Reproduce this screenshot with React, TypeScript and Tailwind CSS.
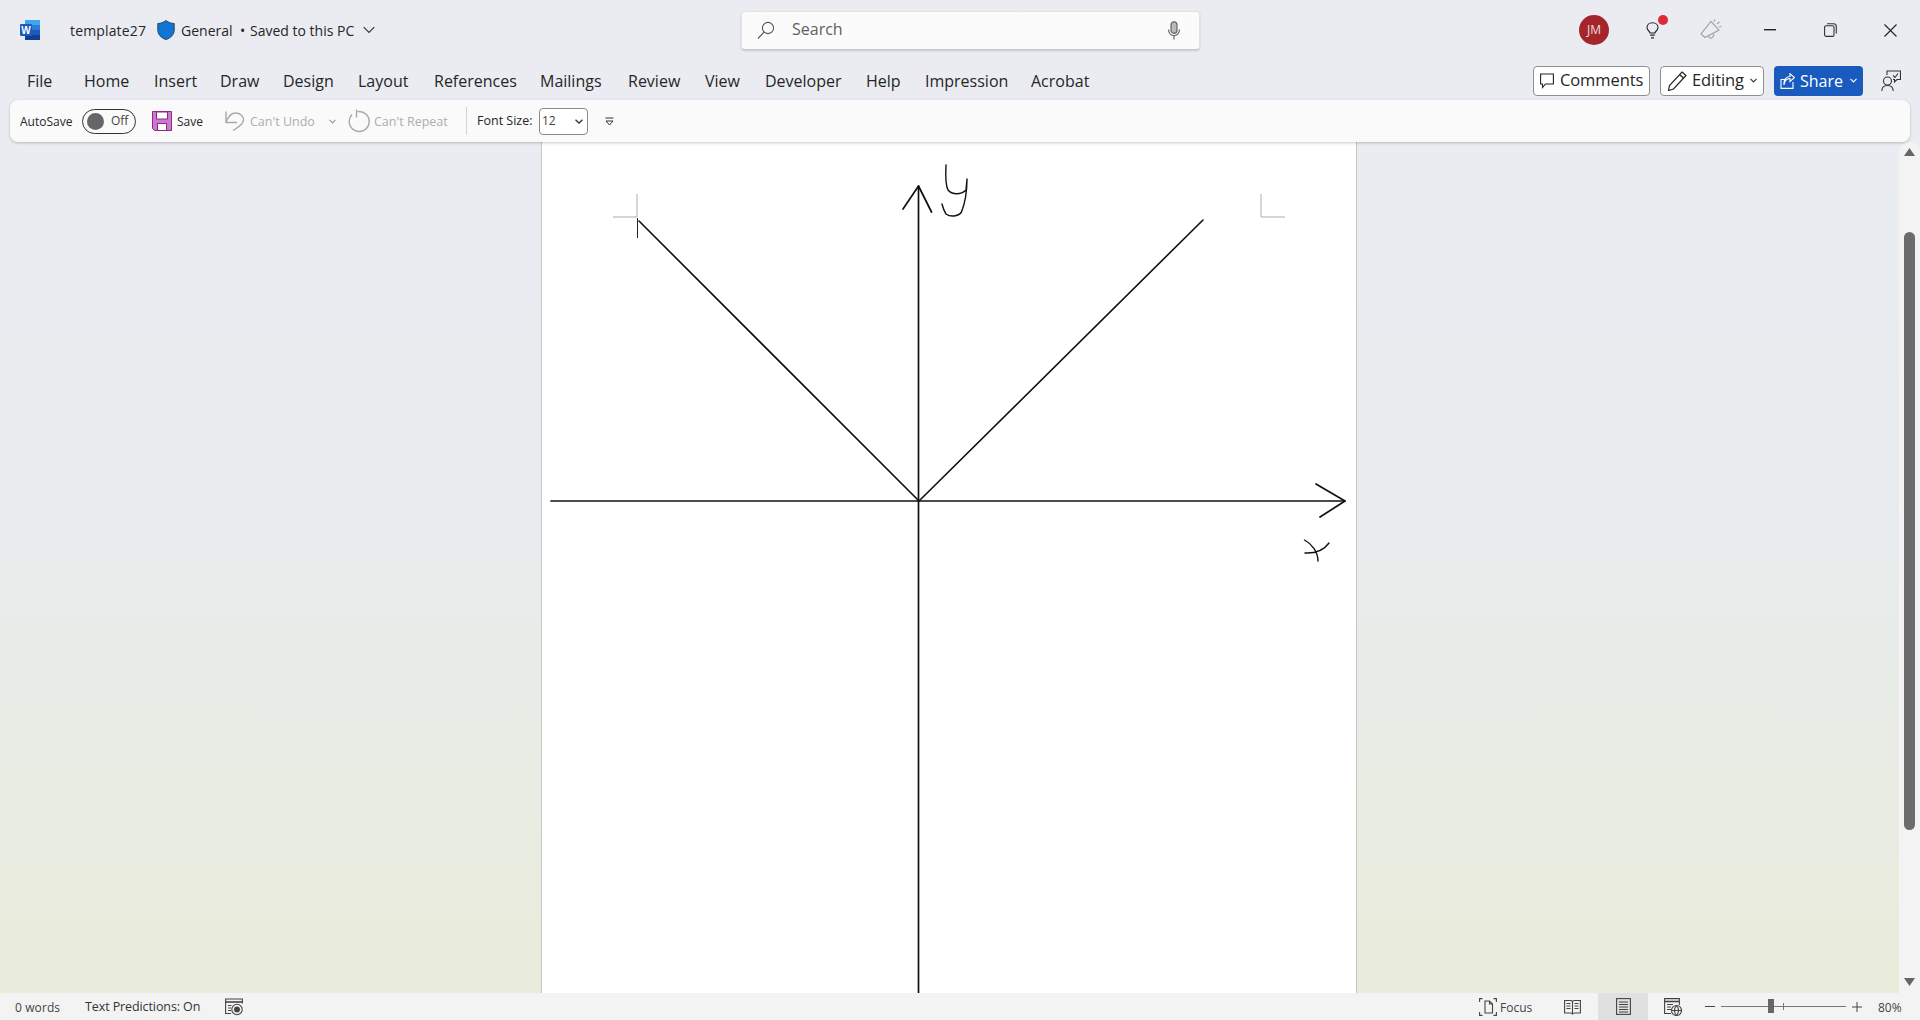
import React from "react";

const font = { fontFamily: '"Open Sans", "Noto Sans", sans-serif' };

function WordIcon() {
  return (
    <svg width="20" height="20" viewBox="0 0 20 20" className="shrink-0">
      <rect x="5" y="0" width="15" height="5" fill="#41a5ee" />
      <rect x="5" y="5" width="15" height="5" fill="#2b7cd3" />
      <rect x="5" y="10" width="15" height="5" fill="#185abd" />
      <rect x="5" y="15" width="15" height="5" fill="#103f91" />
      <rect x="0" y="4" width="12" height="12" rx="1" fill="#1a5bbd" />
      <text x="6" y="13.6" textAnchor="middle" fontSize="10" fontWeight="700" fill="#fff" fontFamily="Liberation Sans">W</text>
    </svg>
  );
}

function Shield() {
  return (
    <svg width="18" height="20" viewBox="0 0 18 20" className="shrink-0">
      <path d="M9 0.5C6.5 2.6 3.8 3.4 0.8 3.5V10C0.8 14.5 4 17.8 9 19.6C14 17.8 17.2 14.5 17.2 10V3.5C14.2 3.4 11.5 2.6 9 0.5Z" fill="#0f76d6" stroke="#33475b" strokeWidth="1" />
    </svg>
  );
}

function TabItem({ label, width }: { label: string; width: number }) {
  return (
    <span className="text-[16px] leading-5 text-[#262626] whitespace-nowrap" style={{ width }}>
      {label}
    </span>
  );
}

const tabs: [string, number][] = [
  ["File", 57],
  ["Home", 70],
  ["Insert", 66],
  ["Draw", 63],
  ["Design", 75],
  ["Layout", 76],
  ["References", 106],
  ["Mailings", 88],
  ["Review", 77],
  ["View", 60],
  ["Developer", 101],
  ["Help", 59],
  ["Impression", 106],
  ["Acrobat", 62],
];

export default function App() {
  return (
    <div
      className="relative flex h-[1020px] w-full flex-col overflow-hidden bg-linear-to-b from-[#eaecf2] via-[#e8ecee] to-[#e9ecd9]"
      style={font}
    >
      {/* Title bar */}
      <header className="flex h-[60px] shrink-0 items-center">
        <div className="ml-[20px] flex w-[721px] items-center">
          <WordIcon />
          <span className="ml-[30px] w-[76px] whitespace-nowrap text-[14px] text-[#262626] tracking-[0.15px]">template27</span>
          <span className="ml-[11px]"><Shield /></span>
          <span className="ml-[6px] w-[50px] text-[14px] text-[#262626]">General</span>
          <span className="ml-[9px] w-[10px] text-[14px] text-[#262626]">•</span>
          <span className="w-[106px] whitespace-nowrap text-[14px] text-[#262626]">Saved to this PC</span>
          <svg width="12" height="8" viewBox="0 0 12 8" className="ml-[7px]" fill="none" stroke="#333" strokeWidth="1.1">
            <path d="M0.7 1.2L6 6.5L11.3 1.2" />
          </svg>
        </div>

        <div className="flex h-[39px] w-[459px] items-center rounded-[4px] border border-[#e3e3e3] border-b-[#c8c8c8] bg-[#fbfbfb] pl-[15px] pr-[18px] shadow-[0_1px_2px_rgba(0,0,0,0.15)]">
          <svg width="18" height="18" viewBox="0 0 18 18" fill="none" stroke="#555" strokeWidth="1.1">
            <circle cx="11" cy="7" r="5.6" />
            <path d="M7 11.2L1 17.5" />
          </svg>
          <span className="ml-[17px] pb-[2px] text-[16px] text-[#616161]">Search</span>
          <svg width="14" height="19" viewBox="0 0 14 19" className="ml-auto" fill="none" stroke="#666" strokeWidth="1.2">
            <rect x="4" y="0.8" width="6" height="11.5" rx="3" fill="#bbb" />
            <path d="M1.5 8.5C1.5 12 4 14.5 7 14.5C10 14.5 12.5 12 12.5 8.5M7 14.5V18.5" />
          </svg>
        </div>

        <div className="ml-[379px] flex h-[30px] w-[30px] items-center justify-center rounded-full bg-[#a4262c] text-[12px] text-[#f4dcdc]">JM</div>

        <div className="relative ml-[35px] flex h-[30px] w-[16px] items-center justify-center">
          <svg width="13" height="17" viewBox="0 0 13 17" fill="none" stroke="#222" strokeWidth="1.1">
            <path d="M4 11C4 9.2 1 8.5 1 5.5C1 2.8 3.3 0.7 6.5 0.7C9.7 0.7 12 2.8 12 5.5C12 8.5 9 9.2 9 11H4Z" />
            <path d="M4.2 13.2H8.8M5 15.8H8" strokeWidth="1.2" />
          </svg>
          <span className="absolute left-[14px] top-0 h-[10px] w-[10px] rounded-full bg-[#dc2c3a]" />
        </div>

        <div className="ml-[40px] flex items-center">
          <svg width="22" height="22" viewBox="0 0 22 22" fill="none" stroke="#a3a3a3" strokeWidth="1.2">
            <path d="M11 2.5L19 11L5 18.5L1 15Z" />
            <path d="M8.5 17C9 20 13 20.5 14 15" />
            <path d="M14 2.5L15 0.5M17 5L19.5 3M19 8L21.5 7.5" />
          </svg>
        </div>

        <div className="ml-[42px] flex items-center">
          <svg width="12" height="2" viewBox="0 0 12 2"><rect width="12" height="1.4" fill="#222" /></svg>
        </div>

        <div className="ml-[48px] flex items-center">
          <svg width="13" height="14" viewBox="0 0 13 14" fill="none" stroke="#333" strokeWidth="1.1">
            <rect x="0.6" y="2.8" width="9.4" height="10.6" rx="1.5" />
            <path d="M3 0.8H9.5C11.2 0.8 12.3 2 12.3 3.6V10.5" />
          </svg>
        </div>

        <div className="ml-[47px] flex items-center">
          <svg width="13" height="13" viewBox="0 0 13 13" stroke="#222" strokeWidth="1.1"><path d="M0.5 0.5L12.5 12.5M12.5 0.5L0.5 12.5" /></svg>
        </div>
      </header>

      {/* Ribbon tabs */}
      <nav className="flex h-[40px] shrink-0 items-center pt-[1px]">
        <div className="ml-[27px] flex items-center">
          {tabs.map(([l, w]) => (
            <TabItem key={l} label={l} width={w} />
          ))}
        </div>

        <button className="ml-[440px] flex h-[30px] w-[117px] items-center whitespace-nowrap rounded-[4px] border border-[#8f8f8f] bg-white pl-[6px] text-[16.5px] text-[#262626] tracking-[-0.1px]">
          <svg width="14" height="16" viewBox="0 0 14 16" fill="none" stroke="#222" strokeWidth="1.1">
            <path d="M0.6 1H13.4V11H5.5L2.5 14.5V11H0.6Z" />
          </svg>
          <span className="ml-[6px]">Comments</span>
        </button>

        <button className="ml-[10px] flex h-[30px] w-[104px] items-center whitespace-nowrap rounded-[4px] border border-[#8f8f8f] bg-white pl-[6px] text-[16.5px] text-[#262626] tracking-[-0.1px]">
          <svg width="20" height="20" viewBox="0 0 20 20" fill="none" stroke="#222" strokeWidth="1.2">
            <path d="M15 1L19 4.5L6.5 18L1.5 19.5L2.5 14.5Z" />
            <path d="M12.5 3.5L16.5 7" />
          </svg>
          <span className="ml-[5px]">Editing</span>
          <svg width="7" height="5" viewBox="0 0 7 5" className="ml-auto mr-[6px]" fill="none" stroke="#333" strokeWidth="1.1"><path d="M0.5 0.8L3.5 4L6.5 0.8" /></svg>
        </button>

        <button className="ml-[10px] flex h-[30px] w-[89px] items-center rounded-[4px] bg-[#185abd] pl-[6px] text-[16px] text-white">
          <svg width="15" height="16" viewBox="0 0 15 16" fill="none" stroke="#fff" strokeWidth="1.1">
            <path d="M13 9V15.4H1V6.5H5" />
            <path d="M4 12C4.5 8 7 5.5 10 5.5V8.5L14.5 4.5L10 0.8V3.5C6 3.5 3.5 7 4 12Z" />
          </svg>
          <span className="ml-[5px]">Share</span>
          <svg width="7" height="5" viewBox="0 0 7 5" className="ml-auto mr-[6px]" fill="none" stroke="#fff" strokeWidth="1.1"><path d="M0.5 0.8L3.5 4L6.5 0.8" /></svg>
        </button>

        <div className="ml-[18px]">
          <svg width="20" height="22" viewBox="0 0 20 22" fill="none" stroke="#333" strokeWidth="1.1">
            <path d="M6 5V1H19.5V9.5H16L13.5 12V9.5H12" />
            <circle cx="6.5" cy="11" r="4" />
            <path d="M0.8 21C0.8 17.5 3 15.5 6.5 15.5C10 15.5 12.2 17.5 12.2 21" />
            <path d="M12 5.5L14 7.5L17 3.5" />
          </svg>
        </div>
      </nav>

      {/* Quick access toolbar */}
      <div className="relative z-10 mx-[10px] flex h-[42px] shrink-0 items-center rounded-[8px] bg-[#fafafa] pl-[10px] text-[12px] text-[#262626] shadow-[0_1px_3px_rgba(0,0,0,0.22)]">
        <span className="w-[54px] pt-[2px]">AutoSave</span>
        <div className="ml-[8px] flex h-[25px] w-[54px] items-center rounded-full border border-[#333] pl-[4px]">
          <span className="h-[17px] w-[17px] rounded-full bg-[#666]" />
          <span className="ml-[7px] text-[12px] text-[#444]">Off</span>
        </div>
        <svg width="20" height="20" viewBox="0 0 20 20" className="ml-[16px]">
          <path d="M0.5 0.5H19.5V19.5H2.5L0.5 17.5Z" fill="#c77cc9" stroke="#92278f" strokeWidth="1" />
          <rect x="4.5" y="1" width="11" height="7" fill="#fff" stroke="#92278f" strokeWidth="1" />
          <rect x="5.5" y="12.5" width="9" height="7" fill="#fff" stroke="#92278f" strokeWidth="1" />
        </svg>
        <span className="ml-[5px] w-[27px] pt-[2px]">Save</span>

        <svg width="20" height="20" viewBox="0 0 20 20" className="ml-[21px]" fill="none" stroke="#a8a8a8" strokeWidth="1.4">
          <path d="M1 0.5V11.5H12" />
          <path d="M1.2 11C3.5 5 6.5 2 10.5 2C15 2 18.5 5 18.5 9C18.5 13 14 16 8 19.5" />
        </svg>
        <span className="ml-[5px] w-[79px] whitespace-nowrap pt-[2px] text-[12.5px] text-[#adadad]">Can't Undo</span>
        <svg width="7" height="5" viewBox="0 0 7 5" fill="none" stroke="#999" strokeWidth="1.1"><path d="M0.5 0.8L3.5 4L6.5 0.8" /></svg>
        <svg width="22" height="24" viewBox="0 0 22 24" className="ml-[12px]" fill="none" stroke="#a8a8a8" strokeWidth="1.4">
          <path d="M4 5.5A10 10 0 1 0 9.5 2.6" />
          <path d="M8.5 0.5V8.5" />
        </svg>
        <span className="ml-[4px] w-[92px] whitespace-nowrap pt-[2px] text-[12.5px] text-[#adadad]">Can't Repeat</span>
        <span className="h-[28px] w-px bg-[#d4d4d4]" />
        <span className="ml-[10px] w-[62px] whitespace-nowrap text-[12.5px]">Font Size:</span>
        <div className="flex h-[27px] w-[49px] items-center rounded-[4px] border border-[#8a8a8a] bg-white pl-[2px] pr-[4px] text-[#444]">
          <span>12</span>
          <svg width="8" height="5" viewBox="0 0 8 5" className="ml-auto" fill="none" stroke="#333" strokeWidth="1.3"><path d="M0.5 0.8L4 4L7.5 0.8" /></svg>
        </div>
        <svg width="9" height="9" viewBox="0 0 9 9" className="ml-[17px]" fill="none" stroke="#333" strokeWidth="1"><path d="M0.5 1H8.5M1 4L4.5 8L8 4Z" /></svg>
      </div>

      {/* Document area */}
      <main className="flex min-h-0 flex-1">
        <div className="flex min-w-0 flex-1 justify-center pr-[1px]">
          <div className="relative h-full w-[816px] border-x border-[#c6c6c6] bg-white">
            <svg viewBox="542 142 814 851" className="h-full w-full" fill="none" strokeLinecap="round" strokeLinejoin="round">
              <path d="M637 194V217H613M1261 194V217H1285" stroke="#ababab" strokeWidth="1" strokeLinecap="butt" />
              <path d="M637.5 218V238" stroke="#222" strokeWidth="1" strokeLinecap="butt" />
              <g stroke="#111" strokeWidth="1.7">
                <path d="M551 501H1345M918.5 993V186" />
                <path d="M1316 484L1345 501L1320 517M903 209L918.5 186L931.5 212" />
                <path d="M639 221L919 501L1203 220" strokeWidth="1.6" />
                <path d="M946 165C945.5 175 945 184 948 190C952 195 961 195 966 190L967 179C967 190 965 203 961.5 212C958 217 950 217 946 214C944 211 943 208 942 204" strokeWidth="1.4" />
                <path d="M1304.5 540C1312 544 1318 552 1318 561M1305 553C1316 553.5 1324 550 1329 543" strokeWidth="1.4" />
              </g>
            </svg>
          </div>
        </div>

        {/* Scrollbar */}
        <aside className="flex w-[21px] shrink-0 flex-col items-center rounded-t-[10px] bg-[#f3f3f3] pt-[6px] pb-[7px]">
          <svg width="11" height="8" viewBox="0 0 11 8"><path d="M5.5 0L11 8H0Z" fill="#666" /></svg>
          <span className="mt-[76px] h-[598px] w-[11px] rounded-full bg-[#6b6b6b]" />
          <svg width="11" height="8" viewBox="0 0 11 8" className="mt-auto"><path d="M5.5 8L11 0H0Z" fill="#666" /></svg>
        </aside>
      </main>

      {/* Status bar */}
      <footer className="flex h-[27px] shrink-0 items-center bg-[#f3f3f3] text-[12px] text-[#444]">
        <span className="ml-[15px] w-[70px] pt-[2px] tracking-[0.1px]">0 words</span>
        <span className="w-[140px] whitespace-nowrap pt-[2px] text-[12.5px] text-[#333] tracking-[-0.1px]">Text Predictions: On</span>
        <svg width="18" height="18" viewBox="0 0 18 18" fill="none" stroke="#444" strokeWidth="1.1">
          <path d="M0.6 5.5V1H17.4V5.5M0.6 1V15.5H6" />
          <path d="M0.6 4H17.4" strokeWidth="1.6" />
          <path d="M3 7.5H6.5M3 10H6M3 12.5H6" />
          <circle cx="12" cy="11.5" r="5.2" />
          <circle cx="12" cy="11.5" r="2.4" fill="#444" />
        </svg>

        <svg width="18" height="18" viewBox="0 0 18 18" className="ml-[1236px]" fill="none" stroke="#444" strokeWidth="1.1">
          <path d="M6 3H10.5L13.5 6V15H6V3Z" />
          <path d="M10.5 3V6H13.5" />
          <path d="M0.6 4V0.6H3.5M14.5 0.6H17.4V4M0.6 14V17.4H3.5M14.5 17.4H17.4V14" />
        </svg>
        <span className="ml-[3px] w-[64px] pt-[2px]">Focus</span>
        <svg width="17" height="16" viewBox="0 0 17 16" fill="none" stroke="#444" strokeWidth="1.1">
          <path d="M0.6 1.5H6.5C7.5 1.5 8.5 2 8.5 3C8.5 2 9.5 1.5 10.5 1.5H16.4V14H10.5C9.5 14 8.5 14.5 8.5 15.5C8.5 14.5 7.5 14 6.5 14H0.6Z" />
          <path d="M8.5 3V15M2.5 4.5H6.5M2.5 7H6.5M2.5 9.5H6.5M10.5 4.5H14.5M10.5 7H14.5M10.5 9.5H14.5" />
        </svg>
        <div className="ml-[17px] flex h-[27px] w-[50px] items-center justify-center bg-[#e0e0e0]">
          <svg width="15" height="17" viewBox="0 0 15 17" fill="none" stroke="#444" strokeWidth="1.1">
            <rect x="0.6" y="0.6" width="13.8" height="15.8" />
            <path d="M3 4H12M3 6.5H12M3 9H12M3 11.5H12M3 14H12" />
          </svg>
        </div>
        <svg width="18" height="18" viewBox="0 0 18 18" className="ml-[16px]" fill="none" stroke="#444" strokeWidth="1.1">
          <path d="M7 15.5H0.6V0.6H15.4V7" />
          <path d="M0.6 3.5H15.4" strokeWidth="1.6" />
          <path d="M3 6.5H9M3 9H7M3 11.5H7" />
          <circle cx="12.5" cy="12.5" r="5" />
          <path d="M7.5 12.5H17.5M12.5 7.5C10 10.5 10 14.5 12.5 17.5C15 14.5 15 10.5 12.5 7.5Z" />
        </svg>
        <span className="ml-[23px] h-px w-[10px] bg-[#444]" />
        <div className="relative ml-[6px] h-px w-[125px] bg-[#777]">
          <span className="absolute left-[47px] top-[-7px] h-[14px] w-[6px] bg-[#666]" />
          <span className="absolute left-[62px] top-[-3px] h-[7px] w-px bg-[#777]" />
        </div>
        <svg width="10" height="10" viewBox="0 0 10 10" className="ml-[6px]" stroke="#444" strokeWidth="1"><path d="M0 5H10M5 0V10" /></svg>
        <span className="ml-[16px] pt-[2px]">80%</span>
      </footer>
    </div>
  );
}
